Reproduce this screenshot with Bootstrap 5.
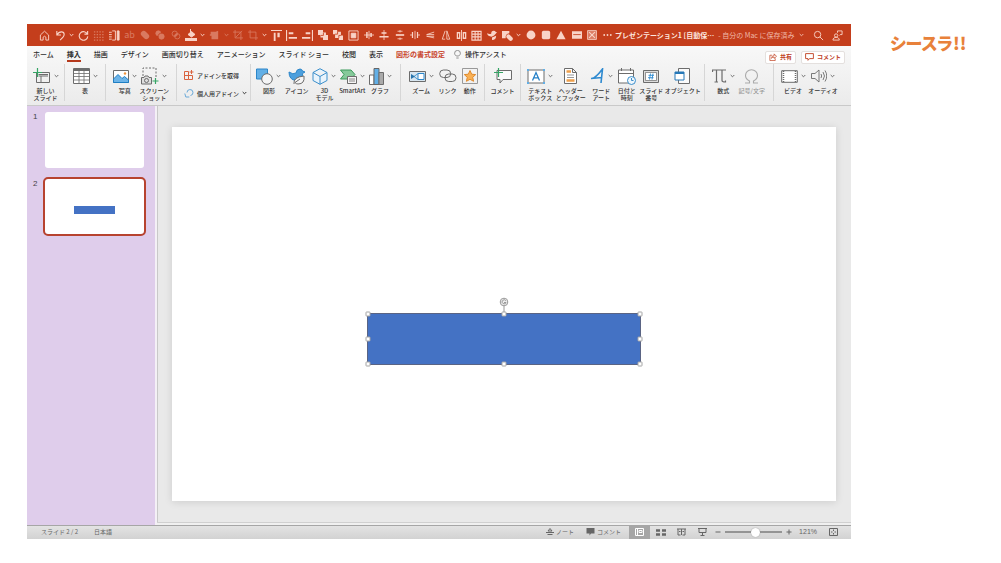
<!DOCTYPE html>
<html lang="ja">
<head>
<meta charset="utf-8">
<meta name="viewport" content="width=device-width, initial-scale=1">
<title>プレゼンテーション1</title>
<link rel="stylesheet" href="https://cdn.jsdelivr.net/npm/bootstrap@5.3.0/dist/css/bootstrap.min.css">
<style>
body{font-family:"Noto Sans CJK JP","Noto Sans",sans-serif;font-size:7px;line-height:8px;color:#333;background:#fff}
svg{display:block;flex:none;fill:none}
svg:not([stroke]){stroke:currentColor}
.plain{border:0;background:none;padding:0;color:inherit;font:inherit;display:flex;align-items:center;justify-content:center}
.shell{padding:24px 0 24px 27px}
.main-window{min-width:0}
.brand{flex:0 0 150px;padding:7px 0 0 39px}
.brand-name{font-size:17px;line-height:24px;font-weight:900;color:#e8813a;font-feature-settings:"palt";white-space:nowrap}
/* title bar */
.titlebar{background:#c43e1c;color:#f9d3c7;height:22px;padding-left:10px}
.quick{flex:0 0 71%}
.quick .plain{flex:1 1 0}
.quick .chev{flex:0 0 8px}
.quick .dim{opacity:.4}
.quick .letters{font-size:9px}
.quick .fillico{fill:currentColor;stroke:none}
.doc-line{gap:4px}
.doc{font-weight:700;color:#fde6df}
.doc-state{color:#f0b8a8}
/* tabs */
.chrome-top{background:linear-gradient(#f8f8f8,#ebebeb);border-bottom:1px solid #c9c9c9}
.tabs{padding:4px 6px 0;height:18px;font-weight:500;white-space:nowrap;gap:9px}
.tab-links{gap:13px}
.tabs a{color:#2e2e2e;text-decoration:none;display:block;height:12px}
.tabs a.current{font-weight:700;border-bottom:2px solid #b5391c}
.tabs a.context{color:#c8432a;font-weight:700}
.tell{gap:4px;height:8px}
.pills{gap:5px;align-self:center}
.pill{background:#fff;border:1px solid #e4e0de;border-radius:2px;color:#c0401f;font-size:6px;font-weight:700;height:13px;padding:0 3px;gap:3px}
/* ribbon */
.ribbon{display:grid;grid-template-columns:38fr 41fr 71fr 74fr 150fr 84fr 36fr 184fr 69fr 77fr;padding-bottom:4px}
.set{display:grid;border-right:1px solid #d6d6d6;padding:3px 4px 0;font-size:6px;line-height:7px;font-weight:500;min-width:0}
.set:last-child{border-right:0;padding-right:13px}
.set-2{grid-template-columns:1fr 1fr;padding-right:7px}
.set-5{grid-template-columns:repeat(5,1fr);padding-right:6px}
.set-links{grid-template-columns:28fr 24fr 20fr;padding-left:6px}
.set-text{grid-template-columns:30fr 30fr 30fr 20fr 28fr 34fr}
.tool{flex-direction:column;justify-content:flex-start;gap:2px;white-space:nowrap;min-width:0;color:#333}
.tool .pic{display:flex;align-items:center;justify-content:center;gap:3px;height:18px;color:#6c6c6c}
.tool .cap{height:14px;text-align:center}
.tool.off{color:#999}.tool.off .pic{color:#aaa}
.addins{gap:10px;padding:4px 0 0 3px}
.addins .plain{justify-content:flex-start;gap:3px;height:8px;white-space:nowrap}
/* body */
.rail{flex:0 0 130px;background:#dfcdeb;padding:6px 9px 0 6px;border-right:2px solid #f4f0f6}
.num{width:10px;font-size:8px;line-height:9px;font-family:"Liberation Sans",sans-serif;color:#444}
.thumb{background:#fff;border-radius:3px;aspect-ratio:16/9;border:0;padding:0}
.thumb-row{gap:2px;padding-right:2px}
.thumb-row.chosen{margin-top:11px}
.thumb-row.chosen .thumb{outline:2px solid #b7432f}
.box{left:29.4%;top:49.9%;width:41.3%;height:13.7%;background:#4472c4}
.stage{background:#e9e9e9;padding:21px 15px 21px 14px;border-left:1px solid #c9c9c9}
.stage-foot{height:3px;border-top:1px solid #d0d0d0;background:#f0f0f0}
.slide{background:#fff;aspect-ratio:16/9;box-shadow:0 1px 8px #0000001f}
.slide .box{border:1px solid #5a6484}
.knob{width:5px;height:5px;background:#fff;border:1px solid #a4a4a4;border-radius:1px}
.spin{left:50%;bottom:100%;margin-bottom:1px}
/* status bar */
.status{background:linear-gradient(#e3e3e3,#d2d2d2);border-top:1px solid #a6a6a6;height:14px;padding:0 13px 0 14px;font-size:6px;color:#666}
.status .info{gap:16px}
.status .tag{gap:2px}
.status .view{width:21px;height:13px}
.status .view.on{background:#a6a6a6;color:#fff}
.zoom-ctl{padding:0 12px 0 2px;gap:0}
.zoomer{appearance:none;width:57px;height:9px;background:linear-gradient(#949494,#949494) center/100% 2px no-repeat;margin:0 4px}
.zoomer::-webkit-slider-thumb{appearance:none;width:9px;height:9px;border-radius:50%;background:#fff;box-shadow:0 0 1px #777}
.plain.pct{font:7px/8px "Liberation Sans",sans-serif;padding-left:7px}
</style>
</head>
<body>
<svg width="0" height="0" class="position-absolute" aria-hidden="true">
<symbol id="v" viewBox="0 0 5 4"><path d="M.7 1 2.5 2.8 4.3 1"/></symbol>
<symbol id="people" viewBox="0 0 12 12"><circle cx="4.5" cy="6" r="1.8"/><path d="M1 11c0-4 7-4 7 0zM6 3V1h5v4H9L8 6"/></symbol>
</svg>
<div class="shell d-flex align-items-start">
<main class="main-window flex-grow-1">
<header class="titlebar d-flex align-items-center">
<div class="quick d-flex align-items-center">
<button class="plain" aria-label="ホーム"><svg width="11" height="11" viewBox="0 0 12 12"><path d="M1.5 5.5 6 1.3l4.500 4.200V11H7.500V7.800q-1.500-2-3 0V11h-3z"/></svg></button>
<button class="plain" aria-label="元に戻す"><svg width="11" height="11" viewBox="0 0 12 12"><path d="M2 1v4.500h4.500M2 5.500C5 .5 10 1.500 10 5c0 2-2 4-4.500 6" stroke-width="1.200"/></svg></button>
<button class="plain chev" aria-label="履歴"><svg width="5" height="4"><use href="#v"/></svg></button>
<button class="plain" aria-label="やり直し"><svg width="11" height="11" viewBox="0 0 12 12"><path d="M10.500 1v3.500H7M10.300 4.500A4.700 4.700 0 1 0 10.700 7" stroke-width="1.200"/></svg></button>
<button class="plain dim" aria-label="グリッド"><svg width="11" height="11" viewBox="0 0 12 12"><path d="M1 2h11M1 5h11M1 8h11M1 11h11" stroke-dasharray="1.500 1.500" stroke-width="1.300"/></svg></button>
<button class="plain" aria-label="段組み"><svg width="11" height="11" viewBox="0 0 12 12"><path d="M0 2.500h3M0 5h3M0 7.500h3M0 10h3M3.500 1H7v10H3.500"/><path d="M9 1h2v10H9z" fill="currentColor"/></svg></button>
<button class="plain dim letters" aria-label="文字">ab</button>
<button class="plain dim" aria-label="結合"><svg width="10" height="10" viewBox="0 0 12 12"><path d="m4.500 4.500 3 3" stroke-width="7" stroke-linecap="round"/></svg></button>
<button class="plain dim" aria-label="型抜き"><svg width="10" height="10" viewBox="0 0 12 12"><circle cx="4" cy="4" r="3" fill="currentColor"/><circle cx="7.800" cy="7.800" r="3.200" fill="currentColor"/><path d="M3.500 8.500q0-4.500 5-5" stroke="#c43e1c"/></svg></button>
<button class="plain dim" aria-label="切り出し"><svg width="10" height="10" viewBox="0 0 12 12"><circle cx="4.500" cy="4.500" r="3.200"/><circle cx="7.500" cy="7.500" r="3.200"/><path d="m4.500 7.500 3-3" stroke-width="2"/></svg></button>
<button class="plain" aria-label="塗りつぶし"><svg width="12" height="12" viewBox="0 0 12 12"><path d="m3 5.500 3.500-3L10 5.500 6.500 8zM5.500 0v3" fill="currentColor"/><path d="M0 10.500h12" stroke-width="3"/></svg></button>
<button class="plain chev" aria-label="色"><svg width="5" height="4"><use href="#v"/></svg></button>
<button class="plain dim" aria-label="枠線"><svg class="fillico" width="10" height="10" viewBox="0 0 12 12"><path d="M2 2h6l3-1v10H3V7H1V5h1z"/></svg></button>
<button class="plain chev dim" aria-label="枠線の色"><svg width="5" height="4"><use href="#v"/></svg></button>
<button class="plain dim" aria-label="トリミング"><svg width="10" height="10" viewBox="0 0 12 12"><path d="M2.500 0v9.500H12M0 2.500h9.500V12M3 9l8-8"/></svg></button>
<button class="plain dim" aria-label="図形でトリミング"><svg width="10" height="10" viewBox="0 0 12 12"><path d="M2.500 0v9.500H12M0 2.500h9.500V12"/></svg></button>
<button class="plain chev" aria-label="トリミングの種類"><svg width="5" height="4"><use href="#v"/></svg></button>
<button class="plain" aria-label="上揃え"><svg class="fillico" width="11" height="11" viewBox="0 0 12 12"><path d="M0 0h12v1.200H0zM3 3h2v9H3zM7 3h2.500v5H7z"/></svg></button>
<button class="plain" aria-label="左揃え"><svg class="fillico" width="11" height="11" viewBox="0 0 12 12"><path d="M0 0h1.200v12H0zM3 2.500h5v2H3zM3 7.500h9v2H3z"/></svg></button>
<button class="plain" aria-label="右揃え"><svg class="fillico" width="11" height="11" viewBox="0 0 12 12"><path d="M10.800 0H12v12h-1.200zM4 2.500h5v2H4zM0 7.500h9v2H0z"/></svg></button>
<button class="plain" aria-label="前面へ移動"><svg class="fillico" width="10" height="10" viewBox="0 0 12 12"><path d="M0 0h6v3h3.500v3H12v6H6V9H3V6H0z"/><path d="M6.500 3.500v3h-3" fill="none" stroke="#c43e1c"/></svg></button>
<button class="plain" aria-label="背面へ移動"><svg class="fillico" width="10" height="10" viewBox="0 0 12 12"><path d="M0 0h5v2h4.500v4.500H12V12H7V9.500H2.500V5H0z"/><path d="M5.500 2v3h-3M9.500 6.500H7v3" fill="none" stroke="#c43e1c"/></svg></button>
<button class="plain" aria-label="グループ化"><svg width="11" height="11" viewBox="0 0 12 12"><path d="M1 1h10v10H1z"/><path d="M3.500 3.500h5v5h-5z" fill="currentColor"/></svg></button>
<button class="plain" aria-label="左右中央"><svg width="10" height="10" viewBox="0 0 12 12"><path d="M0 6h12M6 1v10"/><path d="M3.500 2.500v7M8.500 3.500v5" stroke-width="1.800"/></svg></button>
<button class="plain" aria-label="上下中央"><svg width="10" height="10" viewBox="0 0 12 12"><path d="M6 0v12"/><path d="M3 3.500h6M.5 8h11" stroke-width="1.800"/></svg></button>
<button class="plain" aria-label="上下に整列"><svg width="10" height="10" viewBox="0 0 12 12"><path d="M3 1.500h6M3 10.500h6M6 0v3M6 9v3"/><path d="M1 6h10" stroke-width="2"/></svg></button>
<button class="plain" aria-label="左右に整列"><svg width="10" height="10" viewBox="0 0 12 12"><path d="M0 6h2.500M9.500 6H12M6 1v10"/><path d="M3 2.500v7M9 2.500v7" stroke-width="1.500"/></svg></button>
<button class="plain" aria-label="上下反転"><svg width="10" height="10" viewBox="0 0 12 12"><path d="M11 2.500 2 5.500h9M11 9.500l-9-2h9" /></svg></button>
<button class="plain" aria-label="左右反転"><svg width="10" height="10" viewBox="0 0 12 12"><path d="M5 1 1.500 11H5M7 1l3.500 10H7z"/></svg></button>
<button class="plain" aria-label="回転"><svg width="11" height="11" viewBox="0 0 12 12"><path d="M6 0v12"/><path d="M1.500 3v6H4V3zM8 3v6h2.500V3z" stroke-width="1.400"/></svg></button>
<button class="plain" aria-label="表"><svg width="11" height="11" viewBox="0 0 12 12"><path d="M1 1.500h10v9.500H1zM1 4.500h10M1 7.500h10M4.500 1v10M7.700 1v10" stroke-width="1.200"/></svg></button>
<button class="plain" aria-label="アイコン"><svg class="fillico" width="10" height="10" viewBox="0 0 12 12"><path d="M0 4q3 1.500 5 .5 0-3.500 3-3.500 2 0 2.500 1.500H12L10.500 4.500Q9 7 5.500 8 1 8 0 4zM6 9l5-2q0 5-5 5z"/></svg></button>
<button class="plain" aria-label="図形"><svg class="fillico" width="11" height="11" viewBox="0 0 12 12"><path d="M0 1h8v2.500Q3.500 4 4 9H0z"/><path d="m7 7 2.500 2.500" stroke="currentColor" stroke-width="4.500" stroke-linecap="round"/></svg></button>
<button class="plain chev" aria-label="図形の種類"><svg width="5" height="4"><use href="#v"/></svg></button>
<button class="plain" aria-label="楕円"><svg class="fillico" width="10" height="10" viewBox="0 0 12 12"><circle cx="6" cy="6" r="5.300"/></svg></button>
<button class="plain" aria-label="角丸四角形"><svg class="fillico" width="10" height="10" viewBox="0 0 12 12"><rect x="1" y="1" width="10" height="10" rx="2"/></svg></button>
<button class="plain" aria-label="三角形"><svg class="fillico" width="10" height="10" viewBox="0 0 12 12"><path d="m6 1 5.500 10H.5z"/></svg></button>
<button class="plain" aria-label="テキスト"><svg class="fillico" width="10" height="10" viewBox="0 0 12 12"><path d="M0 1.500h12v9H0z"/><path d="M1.500 5.500h9" stroke="#c43e1c"/></svg></button>
<button class="plain" aria-label="閉じる"><svg width="10" height="10" viewBox="0 0 12 12"><path d="M.7.7h10.600v10.600H.7z" fill="#dc7c64"/><path d="m2.500 2.500 7 7m0-7-7 7" stroke-width="1.300"/></svg></button>
<button class="plain" aria-label="その他"><svg class="fillico" width="9" height="4" viewBox="0 0 9 4"><circle cx="1.200" cy="2" r=".9"/><circle cx="4.500" cy="2" r=".9"/><circle cx="7.800" cy="2" r=".9"/></svg></button>
</div>
<div class="doc-line d-flex align-items-center flex-grow-1 text-nowrap">
<span class="doc">プレゼンテーション1 [自動保⋯</span><span class="doc-state">- 自分の Mac に保存済み</span>
<button class="plain doc-state" aria-label="書類メニュー"><svg width="5" height="4"><use href="#v"/></svg></button>
</div>
<div class="d-flex gap-2 pe-1 me-1">
<button class="plain" aria-label="検索"><svg width="11" height="11" viewBox="0 0 12 12"><circle cx="5" cy="5" r="3.500"/><path d="m7.500 7.500 3.500 3.500"/></svg></button>
<button class="plain" aria-label="共同編集"><svg width="11" height="11"><use href="#people"/></svg></button>
</div>
</header>
<div class="chrome-top">
<nav class="tabs d-flex align-items-start" aria-label="リボン">
<div class="tab-links d-flex"><a href="#">ホーム</a><a href="#" class="current">挿入</a><a href="#">描画</a><a href="#">デザイン</a><a href="#">画面切り替え</a><a href="#">アニメーション</a><a href="#">スライド ショー</a><a href="#">校閲</a><a href="#">表示</a><a href="#" class="context">図形の書式設定</a></div>
<button class="plain tell"><svg width="7" height="9" viewBox="0 0 7 9"><path d="M2.300 6Q.6 4.700.6 3.300a2.900 2.900 0 0 1 5.800 0Q6.400 4.700 4.700 6zM2.300 8h2.400" stroke="#777" stroke-width=".8"/></svg>操作アシスト</button>
<div class="pills d-flex ms-auto">
<button class="plain pill"><svg width="8" height="8" viewBox="0 0 9 9"><path d="M3.500 2.500H1v6h6V6M2.800 6q0-3 3-3V1l2.700 2.800L5.800 6V4.500Q4 4.500 2.800 6z" stroke-width=".8"/></svg>共有</button>
<button class="plain pill"><svg width="9" height="8" viewBox="0 0 9 8"><path d="M.6.6h7.800v5H4.500L3 7.300V5.600H.6z" stroke-width=".9"/></svg>コメント</button>
</div>
</nav>
<div class="ribbon">
<div class="set">
<button class="plain tool"><span class="pic"><svg width="18" height="17" viewBox="0 0 18 17"><path d="M3.500 4.500h13v10h-13zM5.500 8h9.500M8 8v6.500M5.500 6.500H15" /><path d="M4.500 0v9M0 4.500h9" stroke="#35a565" stroke-width="1.200"/></svg><svg width="5" height="4"><use href="#v"/></svg></span><span class="cap">新しい<br>スライド</span></button>
</div>
<div class="set">
<button class="plain tool"><span class="pic"><svg width="17" height="16" viewBox="0 0 17 16"><path d="M.5.5h16v15H.5z" fill="#fff"/><path d="M.5 2h16" stroke-width="2"/><path d="M.5 5.500h16M.5 8.500h16M.5 12h16M6 3v12M11 3v12" stroke-width=".8"/></svg><svg width="5" height="4"><use href="#v"/></svg></span><span class="cap">表</span></button>
</div>
<div class="set set-2">
<button class="plain tool"><span class="pic"><svg width="16" height="13" viewBox="0 0 16 13"><path d="M.5.5h15v12H.5z" fill="#fff"/><path d="M.5 12.500V9L5 4.500l4 4 2.500-2 4 3.500v2.500z" fill="#6db4e8" stroke="#1f7fc4"/><circle cx="12" cy="3.500" r="1.200" fill="#f0933a" stroke="none"/></svg><svg width="5" height="4"><use href="#v"/></svg></span><span class="cap">写真</span></button>
<button class="plain tool"><span class="pic"><svg width="18" height="18" viewBox="0 0 18 18"><path d="M2 9V1h13v9" stroke-dasharray="2 1.500"/><path d="M.5 10.500H3l1-1.500h3l1 1.500h2.500v6.500H.5z" fill="#ddd"/><circle cx="5.500" cy="13.500" r="2"/><path d="M14.500 11v6M11.500 14h6" stroke="#35a565" stroke-width="1.200"/></svg><svg width="5" height="4"><use href="#v"/></svg></span><span class="cap">スクリーン<br>ショット</span></button>
</div>
<div class="set">
<div class="addins d-flex flex-column justify-content-start">
<button class="plain"><svg width="10" height="10" viewBox="0 0 10 10" stroke="#d9623f"><path d="M.5 1.500h4v8h-4zM.5 5.500h8v4h-4M7.500 0v4M5.500 2h4"/></svg>アドインを取得</button>
<button class="plain"><svg width="10" height="10" viewBox="0 0 10 10" stroke="#6aa9d8"><path d="M3 4.500a3 3 0 1 1 3.500 3M.8 5.500l1 3.500h3.500"/></svg>個人用アドイン<svg width="5" height="4"><use href="#v"/></svg></button>
</div>
</div>
<div class="set set-5">
<button class="plain tool"><span class="pic"><svg width="17" height="17" viewBox="0 0 17 17"><path d="M.5 1h11v10H.5z" fill="#62afe6" stroke="#2c86c9"/><circle cx="11" cy="11" r="5.300" fill="#f5f5f5"/></svg><svg width="5" height="4"><use href="#v"/></svg></span><span class="cap">図形</span></button>
<button class="plain tool"><span class="pic"><svg width="18" height="17" viewBox="0 0 18 17"><path d="M1 4q4 3 7 1 .5-4 4-4 2 0 2.500 2L17 4l-2.500 1.500Q15 12 8 12.500 1 12 1 4z" fill="#4c9fdd" stroke="#2c86c9"/><path d="M6 16q-1-7 10-8 1 8-6 8-2 0-3-1.500l5-3.500" fill="#f5f5f5"/></svg></span><span class="cap">アイコン</span></button>
<button class="plain tool"><span class="pic"><svg width="16" height="17" viewBox="0 0 16 17"><path d="m8 .7 7 3.800v8L8 16.300l-7-3.800v-8zM1 4.500l7 4 7-4M8 8.500v7.800" fill="#e9f4fc" stroke="#3a8ecb"/></svg><svg width="5" height="4"><use href="#v"/></svg></span><span class="cap">3D<br>モデル</span></button>
<button class="plain tool"><span class="pic"><svg width="17" height="15" viewBox="0 0 17 15"><path d="M.5 1H11l4 4.500-4 4.500H.5L4 5.500z" fill="#86c99a" stroke="#3b9a5a"/><path d="M7.500 7.500h9v7h-9z" fill="#f5f5f5"/><path d="M9 10h6M9 12h6" stroke-width=".8"/></svg><svg width="5" height="4"><use href="#v"/></svg></span><span class="cap">SmartArt</span></button>
<button class="plain tool"><span class="pic"><svg width="15" height="17" viewBox="0 0 15 17"><path d="M.5 7H5v9.500H.5z" fill="#fff"/><path d="M5 .5h5v16H5z" fill="#62afe6" stroke="#666"/><path d="M10 4.500h4.500v12H10z" fill="#aaa"/></svg><svg width="5" height="4"><use href="#v"/></svg></span><span class="cap">グラフ</span></button>
</div>
<div class="set set-links">
<button class="plain tool"><span class="pic"><svg width="17" height="13" viewBox="0 0 17 13"><path d="M.5 1.500h16v10H.5z" fill="#d8e6f0"/><path d="M9 3.500h6v6H9z" fill="#fff" stroke="#2c86c9"/><path d="M2 4v5l4-2.500z" fill="#2874ab" stroke="none"/><path d="M5 6.500 9 3.500M5 6.500l4 3" stroke="#2c86c9" stroke-width=".8"/></svg><svg width="5" height="4"><use href="#v"/></svg></span><span class="cap">ズーム</span></button>
<button class="plain tool"><span class="pic"><svg width="18" height="14" viewBox="0 0 18 14"><rect x=".7" y="1" width="11" height="7.500" rx="3.700"/><rect x="6" y="5" width="11" height="7.500" rx="3.700"/></svg></span><span class="cap">リンク</span></button>
<button class="plain tool"><span class="pic"><svg width="16" height="16" viewBox="0 0 16 16"><path d="M.5.5h15v15H.5z" stroke="#999"/><path d="m8 2.500 1.700 3.700 4 .4-3 2.700.9 4L8 11.300l-3.600 2 .9-4-3-2.700 4-.4z" fill="#f9b054" stroke="#e08a2c"/></svg></span><span class="cap">動作</span></button>
</div>
<div class="set">
<button class="plain tool"><span class="pic"><svg width="18" height="16" viewBox="0 0 18 16"><path d="M3 2.500h14.500v9H9L6 15v-3.500H3z" fill="#fafafa"/><path d="M4.500 0v9M0 4.500h9" stroke="#35a565" stroke-width="1.200"/></svg></span><span class="cap">コメント</span></button>
</div>
<div class="set set-text">
<button class="plain tool"><span class="pic"><svg width="18" height="15" viewBox="0 0 18 15"><path d="M1 1h16v13H1z" fill="#fff"/><path d="M0 0h2v2H0zM16 0h2v2h-2zM0 13h2v2H0zM16 13h2v2h-2z" fill="#62afe6" stroke="none"/><path d="M5.500 11.500 9 3.500l3.500 8M7 8.800h4" stroke="#2580c8" stroke-width="1.300"/></svg><svg width="5" height="4"><use href="#v"/></svg></span><span class="cap">テキスト<br>ボックス</span></button>
<button class="plain tool"><span class="pic"><svg width="13" height="16" viewBox="0 0 13 16"><path d="M.5.5h8l4 4v11H.5zM8.500.5v4h4" fill="#fff"/><path d="M2.500 3.500H7M2.500 12.500h8" stroke="#ee9f4a" stroke-width="2.500"/><path d="M3 7h7M3 9.500h7" stroke-width=".7"/></svg></span><span class="cap">ヘッダー<br>とフッター</span></button>
<button class="plain tool"><span class="pic"><svg width="15" height="16" viewBox="0 0 15 16"><path d="M1 10.500Q5 11 12.500 1L11 15M1 10.500 12 9.500" stroke="#2e8ad0" stroke-width="1.600"/></svg><svg width="5" height="4"><use href="#v"/></svg></span><span class="cap">ワード<br>アート</span></button>
<button class="plain tool"><span class="pic"><svg width="18" height="17" viewBox="0 0 18 17"><path d="M.5 2h15v13H.5zM.5 5.500h15M3.500 0v3M12.500 0v3" fill="#fff"/><circle cx="13.500" cy="12.500" r="4" fill="#eef6fc" stroke="#3a8ecb"/><path d="M13.500 10v2.500h2" stroke="#3a8ecb"/></svg></span><span class="cap">日付と<br>時刻</span></button>
<button class="plain tool"><span class="pic"><svg width="16" height="13" viewBox="0 0 16 13"><path d="M.5.5h15v12H.5z" fill="#ddd"/><path d="M2.500 2.500h11v8h-11z" fill="#fff" stroke-width=".7"/><path d="M7.500 3.500 6.500 9.500M10 3.500 9 9.500M5.500 5.300h5.500M5 7.700h5.500" stroke="#2e8ad0" stroke-width=".9"/></svg></span><span class="cap">スライド<br>番号</span></button>
<button class="plain tool"><span class="pic"><svg width="17" height="16" viewBox="0 0 17 16"><path d="M4.500.5h11v15h-11z" fill="#fafafa"/><path d="M1 4h9v8H1z" fill="#fff" stroke="#2678b8"/><path d="M1 5h9" stroke="#2678b8" stroke-width="2"/></svg></span><span class="cap">オブジェクト</span></button>
</div>
<div class="set set-2">
<button class="plain tool"><span class="pic"><svg width="15" height="14" viewBox="0 0 15 14"><path d="M.5 3V1H14M4.500 1v12M2.500 13H6M10 1v10.500Q10 13 13.500 13V11.500" stroke-width="1.200"/></svg><svg width="5" height="4"><use href="#v"/></svg></span><span class="cap">数式</span></button>
<button class="plain tool off"><span class="pic"><svg width="15" height="15" viewBox="0 0 15 15"><path d="M1 14h4.500v-2Q1.500 10 1.500 6.500a6 5.800 0 0 1 12 0Q13.500 10 9.500 12v2H14" stroke-width="1.100"/></svg></span><span class="cap">記号/文字</span></button>
</div>
<div class="set set-2">
<button class="plain tool"><span class="pic"><svg width="17" height="13" viewBox="0 0 17 13"><path d="M.7.7h15.600v11.600H.7z" fill="#fff"/><path d="M2.500 1v11M14.500 1v11" stroke-dasharray="1 1" stroke-width="1.500"/></svg><svg width="5" height="4"><use href="#v"/></svg></span><span class="cap">ビデオ</span></button>
<button class="plain tool"><span class="pic"><svg width="16" height="14" viewBox="0 0 16 14"><path d="M.5 4.500H4L8 1v12L4 9.500H.5zM10 5q1.300 2 0 4M12 3q3 4 0 8M14 1.500q3.500 5.500 0 11" stroke-width=".9"/></svg><svg width="5" height="4"><use href="#v"/></svg></span><span class="cap">オーディオ</span></button>
</div>
</div>
</div>
<div class="d-flex">
<nav class="rail" aria-label="スライド一覧">
<div class="thumb-row d-flex"><span class="num">1</span><button class="thumb flex-grow-1" aria-label="スライド 1"></button></div>
<div class="thumb-row chosen d-flex"><span class="num">2</span><button class="thumb flex-grow-1 position-relative" aria-label="スライド 2"><span class="box position-absolute"></span></button></div>
</nav>
<section class="flex-grow-1 d-flex flex-column">
<div class="stage flex-grow-1">
<div class="slide position-relative">
<div class="box position-absolute">
<svg class="spin position-absolute translate-middle-x" width="10" height="16" viewBox="0 0 10 16" stroke="#999"><path d="M5 9v7"/><circle cx="5" cy="5" r="3.800" fill="#eee"/><path d="M6.800 3.800A2 2 0 1 0 7 5.500H5"/></svg>
<i class="knob position-absolute top-0 start-0 translate-middle"></i><i class="knob position-absolute top-0 start-50 translate-middle"></i><i class="knob position-absolute top-0 start-100 translate-middle"></i>
<i class="knob position-absolute top-50 start-0 translate-middle"></i><i class="knob position-absolute top-50 start-100 translate-middle"></i>
<i class="knob position-absolute top-100 start-0 translate-middle"></i><i class="knob position-absolute top-100 start-50 translate-middle"></i><i class="knob position-absolute top-100 start-100 translate-middle"></i>
</div>
</div>
</div>
<div class="stage-foot"></div>
</section>
</div>
<footer class="status d-flex align-items-center text-nowrap">
<div class="info d-flex"><span>スライド 2 / 2</span><span>日本語</span></div>
<div class="d-flex align-items-center ms-auto">
<button class="plain tag me-2 pe-1"><svg width="8" height="8" viewBox="0 0 8 8"><path d="m2 3 2-2.500L6 3zM0 4.500h8M1.500 6.500h5"/></svg>ノート</button>
<button class="plain tag me-2"><svg width="9" height="8" viewBox="0 0 9 8"><path d="M.5 0h8v5.500H5L3.500 7.500v-2h-3z" fill="currentColor" stroke="none"/></svg>コメント</button>
<button class="plain view on" aria-label="標準"><svg width="9" height="8" viewBox="0 0 9 8"><path d="M.5.5h8v7h-8zM2.500.5v7M4 2.500h3v2H4z"/></svg></button>
<button class="plain view" aria-label="スライド一覧"><svg width="10" height="7" viewBox="0 0 10 7"><path d="M0 1.500h4M6 1.500h4M0 5.500h4M6 5.500h4" stroke-width="2.500"/></svg></button>
<button class="plain view" aria-label="閲覧表示"><svg width="9" height="8" viewBox="0 0 9 8"><path d="M0 1h9M1 1v6M4.500 1v6M8 1v6M1 7h2.500M5.500 7H8M2 3.500h1.500M5.500 3.500H7"/></svg></button>
<button class="plain view" aria-label="スライドショー"><svg width="9" height="8" viewBox="0 0 9 8"><path d="M0 .5h9M1 .5v4h7v-4M4.500 4.500v3M2.500 7.500h4"/></svg></button>
<div class="zoom-ctl d-flex align-items-center">
<button class="plain" aria-label="縮小"><svg width="6" height="6" viewBox="0 0 6 6"><path d="M.5 3h5"/></svg></button>
<input class="zoomer" type="range" min="0" max="100" value="53" aria-label="ズーム">
<button class="plain" aria-label="拡大"><svg width="6" height="6" viewBox="0 0 6 6"><path d="M.5 3h5M3 .5v5"/></svg></button>
<button class="plain pct">121%</button>
</div>
<button class="plain" aria-label="ウィンドウに合わせる"><svg width="9" height="8" viewBox="0 0 9 8"><path d="M.5.5h8v7h-8zM4.500 1.500v1.500M4.500 5v1.500M2 4h1.500M5.500 4H7"/></svg></button>
</div>
</footer>
</main>
<aside class="brand"><span class="brand-name">シースラ!!</span></aside>
</div>
<script src="https://cdn.jsdelivr.net/npm/bootstrap@5.3.0/dist/js/bootstrap.bundle.min.js"></script>
</body>
</html>
